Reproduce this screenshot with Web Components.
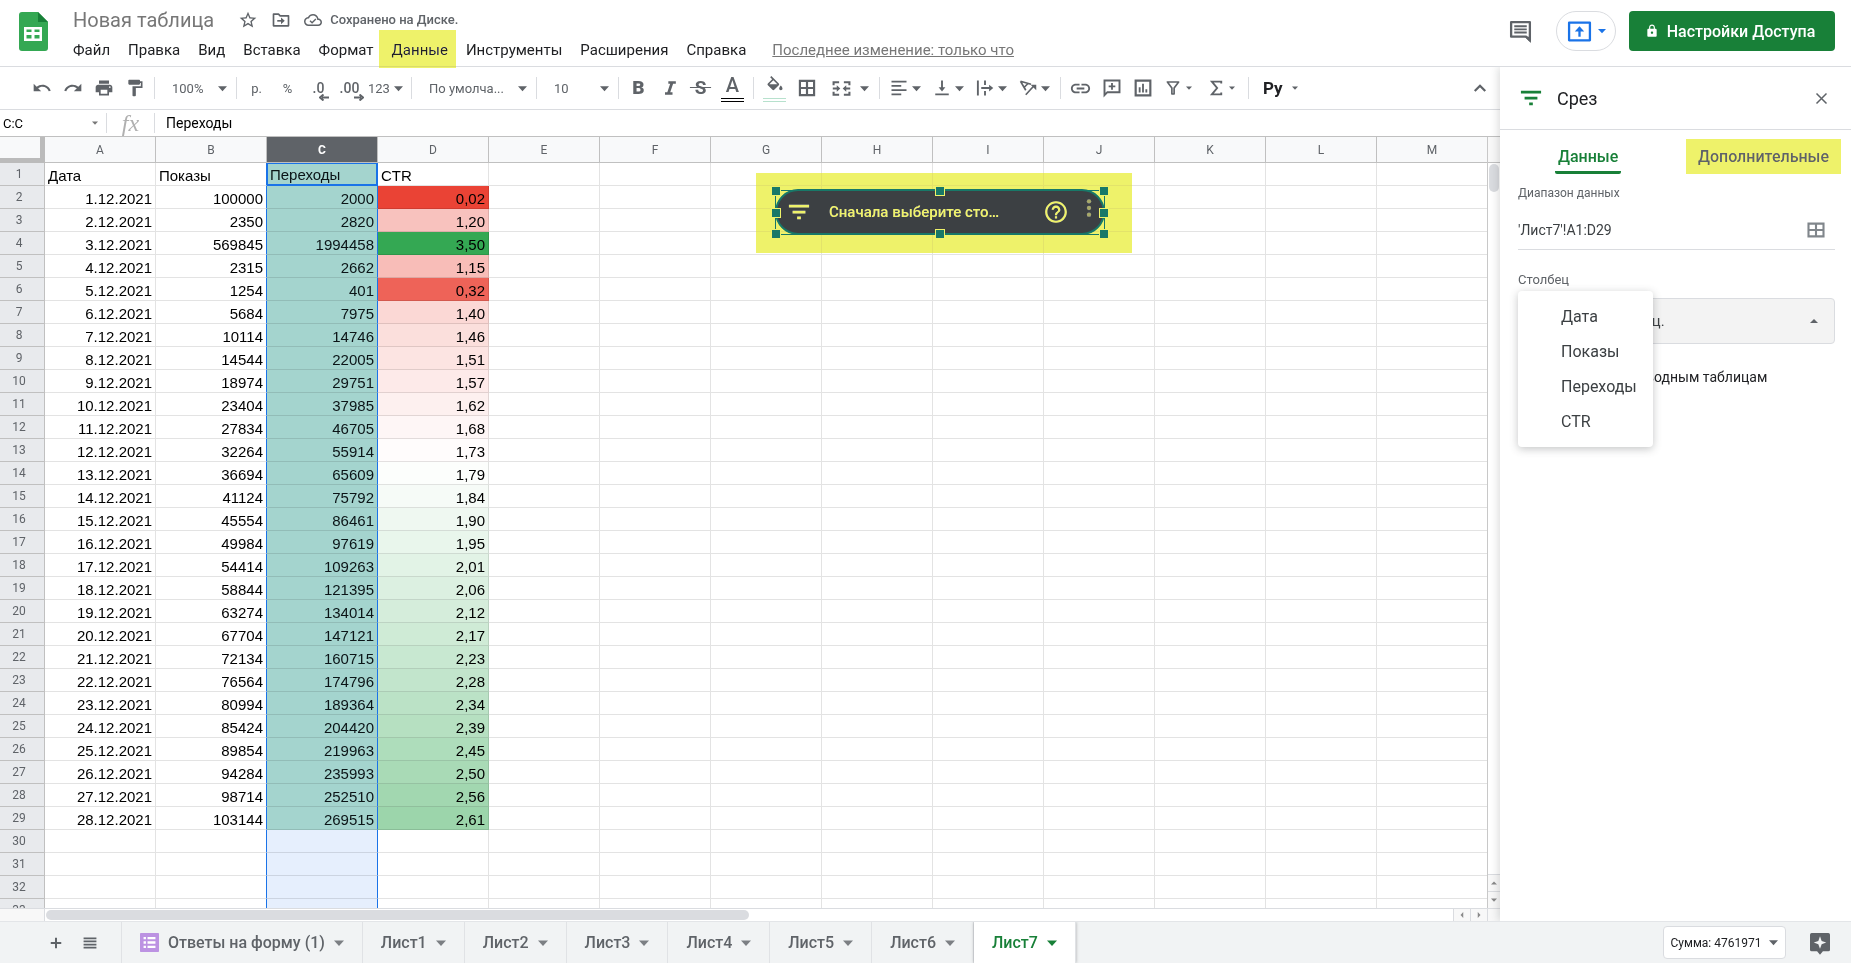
<!DOCTYPE html>
<html lang="ru">
<head>
<meta charset="utf-8">
<title>Новая таблица</title>
<style>
  html, body { margin: 0; height: 100%; }
  body { font-family: Roboto, "Liberation Sans", sans-serif; color: #202124; background: #fff; overflow: hidden; }
</style>
</head>
<body>
<spreadsheet-app></spreadsheet-app>
<script>
const BASE = `<style>
  *, *::before, *::after { box-sizing: border-box; }
  button, select, input { font: inherit; color: inherit; margin: 0; }
  button { border: 0; padding: 0; background: none; display: inline-flex; align-items: center; justify-content: center; white-space: nowrap; }
  select { appearance: none; border: 0; background: none; border-radius: 0; outline: 0; }
</style>`;

function define(name, markup, setup) {
  const template = document.createElement('template');
  customElements.define(name, class extends HTMLElement {
    constructor() {
      super();
      this.attachShadow({ mode: 'open' });
    }
    connectedCallback() {
      if (this.shadowRoot.childNodes.length) return;
      template.innerHTML = BASE + (typeof markup === 'function' ? markup(this) : markup);
      this.shadowRoot.append(template.content.cloneNode(true));
      if (setup) setup(this, this.shadowRoot);
    }
  });
}

/* ---------- icons ---------- */
const line = (d, w = 2, extra = '') => `<path d="${d}" fill="none" stroke="currentColor" stroke-width="${w}" ${extra}/>`;
const solid = d => `<path d="${d}"/>`;
const ICONS = {
  undo: solid('M12.5 8c-2.65 0-5.05.99-6.9 2.6L2 7v9h9l-3.62-3.62c1.39-1.16 3.16-1.88 5.12-1.88 3.54 0 6.55 2.31 7.6 5.5l2.37-.78C21.08 11.03 17.15 8 12.5 8z'),
  redo: solid('M18.4 10.6C16.55 8.99 14.15 8 11.5 8c-4.65 0-8.58 3.03-9.96 7.22L3.9 16c1.05-3.19 4.05-5.5 7.6-5.5 1.95 0 3.73.72 5.12 1.88L13 16h9V7l-3.6 3.6z'),
  print: solid('M19 8H5c-1.66 0-3 1.34-3 3v6h4v4h12v-4h4v-6c0-1.66-1.34-3-3-3zm-3 11H8v-5h8v5zm3-7c-.55 0-1-.45-1-1s.45-1 1-1 1 .45 1 1-.45 1-1 1zm-1-9H6v4h12V3z'),
  paint: solid('M18 4V3c0-.55-.45-1-1-1H5c-.55 0-1 .45-1 1v4c0 .55.45 1 1 1h12c.55 0 1-.45 1-1V6h1v4H9v11c0 .55.45 1 1 1h2c.55 0 1-.45 1-1v-9h8V4h-3z'),
  italic: solid('M10 4v3h2.21l-3.42 10H6v3h9v-3h-2.71l3.42-10H19V4z'),
  fill: solid('M16.56 8.94L7.62 0 6.21 1.41l2.38 2.38-5.15 5.15c-.59.59-.59 1.54 0 2.12l5.5 5.5c.29.29.68.44 1.06.44s.77-.15 1.06-.44l5.5-5.5c.59-.58.59-1.53 0-2.12zM5.21 10L10 5.21 14.79 10H5.21zM19 11.5s-2 2.17-2 3.5c0 1.1.9 2 2 2s2-.9 2-2c0-1.33-2-3.5-2-3.5z'),
  borders: line('M3.5 3.5h17v17h-17zM12 3.5v17M3.5 12h17', 2.6),
  range: line('M2 3.5h20v17H2zM12 3.5v17M2 12h20', 2.8),
  merge: line('M9 4H2v4M15 4h7v4M9 20H2v-4M15 20h7v-4M1 12h6M23 12h-6', 2.6) + solid('M6 8l4.5 4L6 16zM18 8l-4.500 4 4.500 4z'),
  align: line('M2 3.500h20M2 9.200h13M2 14.900h20M2 20.600h13', 2.4),
  valign: line('M3 20.500h18M12 2v12', 2.5) + solid('M7.500 11h9L12 16.500z'),
  wrap: line('M2.500 2v20M12 2v6M12 16v6M7 12h12', 2.5) + solid('M17.500 7.500L23 12l-5.500 4.500z'),
  rotate: line('M2 3l14 4M2 3l7 12M7 11l5-5M9 21L20 9', 2.2) + solid('M15.500 7.500H23V15z'),
  link: solid('M3.900 12c0-1.710 1.390-3.100 3.100-3.100h4V7H7c-2.760 0-5 2.240-5 5s2.240 5 5 5h4v-1.900H7c-1.710 0-3.100-1.390-3.100-3.100zM8 13h8v-2H8v2zm9-6h-4v1.900h4c1.710 0 3.100 1.390 3.100 3.100s-1.390 3.100-3.100 3.100h-4V17h4c2.760 0 5-2.240 5-5s-2.240-5-5-5z'),
  addComment: line('M3 20.500V3h18v14H6.500z', 2.300) + line('M12 6v8M8 10h8', 2.200),
  chart: line('M3.200 3.200h17.600v17.600H3.200z', 2.600) + line('M8 11v6.500M12 7v10.500M16 13.500v4', 2.200),
  funnel: line('M4.500 4h15l-6 8v8h-3v-8z', 2.200, 'stroke-linejoin="round"'),
  sum: line('M19 6V3.500H6.500l7 8.500-7 8.500H19V18', 2.500),
  up: line('M5 16l7-7 7 7', 3),
  star: solid('M22 9.240l-7.190-.620L12 2 9.190 8.630 2 9.240l5.460 4.730L5.820 21 12 17.270 18.180 21l-1.630-7.030L22 9.240zM12 15.400l-3.760 2.270 1-4.280-3.320-2.880 4.380-.380L12 6.100l1.710 4.040 4.380.380-3.320 2.880 1 4.280L12 15.400z'),
  move: line('M3 6.500V19h18V7H11L9 5H3z', 2, 'stroke-linejoin="round"') + line('M7.500 13h7', 2) + solid('M12 9l4.500 4-4.500 4z'),
  cloud: solid('M19.350 10.040C18.670 6.590 15.640 4 12 4 9.110 4 6.600 5.640 5.350 8.040 2.340 8.360 0 10.910 0 14c0 3.310 2.690 6 6 6h13c2.760 0 5-2.240 5-5 0-2.640-2.050-4.780-4.650-4.960zM19 18H6c-2.210 0-4-1.790-4-4 0-2.050 1.530-3.760 3.560-3.970l1.070-.110.500-.950C8.080 7.140 9.940 6 12 6c2.620 0 4.880 1.860 5.390 4.430l.300 1.500 1.530.110c1.560.100 2.780 1.410 2.780 2.960 0 1.650-1.350 3-3 3z') + line('M8 13l2.800 2.800 5-5', 1.800),
  comment: line('M3 3h18v17.500L17.500 17H3z', 2.200, 'stroke-linejoin="round"') + line('M6 7h12M6 10h12M6 13h12', 1.800) + solid('M16 17h6v6z'),
  present: line('M2 3.500h20v17H2z', 2.200, 'stroke-linejoin="round"') + line('M12 17v-7', 2.200) + solid('M7.500 12L12 7l4.500 5z'),
  lock: solid('M18 8h-1V6c0-2.760-2.240-5-5-5S7 3.240 7 6v2H6c-1.100 0-2 .900-2 2v10c0 1.100.900 2 2 2h12c1.100 0 2-.900 2-2V10c0-1.100-.900-2-2-2zm-6 9c-1.100 0-2-.900-2-2s.900-2 2-2 2 .900 2 2-.900 2-2 2zM9 8V6c0-1.660 1.340-3 3-3s3 1.340 3 3v2H9z'),
  filter: solid('M1 4h22v3H1zM5 10.500h14v3H5zM10 17h4v3h-4z'),
  close: line('M4 4l16 16M20 4L4 20', 2.400),
  help: solid('M11 18h2v-2h-2v2zm1-16C6.480 2 2 6.480 2 12s4.480 10 10 10 10-4.480 10-10S17.520 2 12 2zm0 18c-4.410 0-8-3.590-8-8s3.590-8 8-8 8 3.590 8 8-3.590 8-8 8zm0-14c-2.210 0-4 1.790-4 4h2c0-1.100.900-2 2-2s2 .900 2 2c0 2-3 1.750-3 5h2c0-2.250 3-2.500 3-5 0-2.210-1.790-4-4-4z'),
  more: '<circle cx="12" cy="4" r="2.600"/><circle cx="12" cy="12" r="2.600"/><circle cx="12" cy="20" r="2.600"/>',
  plus: line('M12 3v18M3 12h18', 3.400),
  list: line('M1 4h22M1 9.300h22M1 14.700h22M1 20h22', 3.200),
  arrow: solid('M0 6h24L12 19z'),
  arrowUp: solid('M0 18h24L12 6z'),
  arrowLeft: solid('M17 0v24L6 12z'),
  arrowRight: solid('M7 0v24l11-12z'),
  form: '<rect width="24" height="24" rx="1" fill="#bc92e2"/><path d="M4.500 5h3v3h-3zM4.500 10.500h3v3h-3zM4.500 16h3v3h-3zM9.500 5h10v3h-10zM9.500 10.500h10v3h-10zM9.500 16h10v3h-10z" fill="#fff"/>',
  explore: solid('M2 0h20q2 0 2 2v18q0 2-2 2h-6.500L12 26l-3.500-4H2q-2 0-2-2V2q0-2 2-2zm10 4l-2 5.500L4.500 11.500 10 13.500l2 5.500 2-5.500 5.500-2L14 9.500z'),
};
define('ui-icon', el => `<style>
  :host { display: inline-flex; flex: none; width: var(--size, 20px); height: var(--size, 20px); }
  svg { width: 100%; height: 100%; fill: currentColor; display: block; overflow: visible; }
</style><svg viewBox="0 0 24 24" aria-hidden="true">${ICONS[el.getAttribute('name')]}</svg>`);

/* Marker-pen highlight laid over whatever it is placed on. */
define('marker-highlight', `<style>
  :host { display: block; position: absolute; background: #eef26a; mix-blend-mode: darken; pointer-events: none; }
</style>`);

/* ---------- header ---------- */
define('menu-bar', `<style>
  :host { display: flex; align-items: center; gap: 18px; height: 26px; font-size: 15px; white-space: nowrap; }
  .cur { position: relative; }
  marker-highlight { inset: -7px -8px -5px -13px; }
  a { color: #777; margin-left: 8px; }
  button { height: 26px; }
</style>
<button>Файл</button><button>Правка</button><button>Вид</button><button>Вставка</button><button>Формат</button>
<div class="cur"><button>Данные</button><marker-highlight></marker-highlight></div>
<button>Инструменты</button><button>Расширения</button><button>Справка</button>
<a href="#history">Последнее изменение: только что</a>`);

define('app-header', `<style>
  :host { display: flex; height: 67px; border-bottom: 1px solid #dadce0; color: #202124; }
  .logo { flex: none; margin: 11px 25px 0 19px; width: 29px; height: 41px; }
  .doc { flex: 1; min-width: 0; padding-top: 4px; }
  .title { display: flex; align-items: center; height: 31px; margin-bottom: 2px; color: #5f6368; }
  h1 { margin: 0 24px 0 0; font-size: 20px; font-weight: 400; line-height: 28px; color: #777; white-space: nowrap; }
  .title button { margin-right: 13px; }
  .saved { font-size: 13px; font-weight: 500; margin-left: 8px; white-space: nowrap; }
  .actions { display: flex; align-items: flex-start; padding: 11px 16px 0 0; }
  .comments { height: 40px; color: #5f6368; margin-right: 23px; }
  .present { width: 60px; height: 40px; border: 1px solid #dadce0; border-radius: 20px; color: #1a73e8; gap: 6px; margin-right: 13px; }
  .share { height: 40px; width: 206px; padding-right: 4px; border-radius: 4px; background: #188038; color: #fff; font-size: 16px; font-weight: 500; gap: 8px; }
</style>
<svg class="logo" viewBox="0 0 29 41" aria-hidden="true">
  <path d="M3 1h16l10 10v26q0 3-3 3H3q-3 0-3-3V4q0-3 3-3z" fill="#34a853"/>
  <path d="M19 1l10 10H19z" fill="#188038"/>
  <path d="M5 16h18v14H5zM7.500 18.500v2.500h5v-2.500zm8 0v2.500h5v-2.500zM7.500 24v3.500h5V24zm8 0v3.500h5V24z" fill="#fff" fill-rule="evenodd"/>
</svg>
<div class="doc">
  <div class="title">
    <h1>Новая таблица</h1>
    <button aria-label="Пометить"><ui-icon name="star"></ui-icon></button>
    <button aria-label="Переместить"><ui-icon name="move"></ui-icon></button>
    <ui-icon name="cloud" style="--size:18px"></ui-icon>
    <span class="saved">Сохранено на Диске.</span>
  </div>
  <menu-bar></menu-bar>
</div>
<div class="actions">
  <button class="comments" aria-label="Комментарии"><ui-icon name="comment" style="--size:25px"></ui-icon></button>
  <button class="present" aria-label="Презентация"><ui-icon name="present" style="--size:25px"></ui-icon><ui-icon name="arrow" style="--size:8px"></ui-icon></button>
  <button class="share"><ui-icon name="lock" style="--size:14px"></ui-icon>Настройки Доступа</button>
</div>`);

/* ---------- toolbar ---------- */
define('tool-button', el => `<style>
  :host { display: flex; flex: none; width: 31px; height: 32px; }
  :host([swatch]) { width: 33px; }
  :host([menu]) { width: 43px; }
  :host([menu="wide"]) { width: 53px; }
  button { width: 100%; height: 100%; position: relative; }
  :host([menu]) button { justify-content: flex-start; padding-left: 6px; gap: 4px; }
  :host([menu="wide"]) button { padding-left: 10px; gap: 9px; }
  .box { display: flex; justify-content: center; min-width: 18px; }
  .down { color: #5f6368; }
</style><button aria-label="${el.getAttribute('label')}"><span class="box"><slot></slot></span>${el.hasAttribute('menu') ? `<ui-icon class="down" name="arrow" style="--size:${el.hasAttribute('small') ? 6 : 9}px"></ui-icon>` : ''}</button>`);

define('tool-select', el => `<style>
  :host { display: grid; grid-template-columns: 1fr 14px; align-items: center; flex: none; width: 73px; height: 32px; }
  :host([wide]) { width: 116px; }
  select { grid-area: 1 / 1 / 2 / 3; height: 32px; padding: 0 0 0 13px; width: 100%; }
  ui-icon { grid-area: 1 / 2; pointer-events: none; }
</style><select aria-label="${el.getAttribute('label')}"><option>${el.getAttribute('value')}</option></select><ui-icon name="arrow" style="--size:9px"></ui-icon>`);

define('tool-bar', `<style>
  :host { display: flex; align-items: center; height: 43px; padding: 0 5px 0 26px; border-bottom: 1px solid #dadce0; color: #5f6368; font-size: 13px; background: #fff; }
  hr { flex: none; width: 1px; height: 22px; margin: 0 4px; border: 0; background: #dadce0; }
  .dec { position: relative; font-size: 14px; font-weight: 500; }
  .n { display: flex; align-items: center; gap: 4px; width: 42px; height: 32px; justify-content: flex-start; padding-left: 3px; font-size: 13px; }
  .b { font-size: 19px; font-weight: 900; line-height: 22px; }
  .s { font-size: 19px; font-weight: 700; line-height: 22px; }
  .sw { display: flex; flex-direction: column; align-items: center; width: 23px; height: 28px; border-bottom: 4px double #000; font-size: 20px; font-weight: 500; line-height: 22px; }
  .sw.mint { border-color: #b7e1cd; padding-top: 2px; }
  .py { font-size: 17px; font-weight: 700; color: #202124; }
  .end { margin-left: auto; }
  svg { position: absolute; right: -5px; top: 14px; width: 10px; height: 7px; }
</style>
<tool-button label="Отменить"><ui-icon name="undo"></ui-icon></tool-button>
<tool-button label="Повторить"><ui-icon name="redo"></ui-icon></tool-button>
<tool-button label="Печать"><ui-icon name="print"></ui-icon></tool-button>
<tool-button label="Копировать форматирование"><ui-icon name="paint"></ui-icon></tool-button>
<hr>
<tool-select label="Масштаб" value="100%"></tool-select>
<hr>
<tool-button label="Денежный формат">р.</tool-button>
<tool-button label="Процентный формат">%</tool-button>
<tool-button label="Меньше знаков"><span class="dec">.0<svg viewBox="0 0 10 7"><path d="M3 3.500h7M4.500 .500L1 3.500l3.500 3" stroke="#5f6368" stroke-width="2" fill="none"/></svg></span></tool-button>
<tool-button label="Больше знаков"><span class="dec">.00<svg viewBox="0 0 10 7"><path d="M0 3.500h7M5.500 .500L9 3.500l-3.500 3" stroke="#5f6368" stroke-width="2" fill="none"/></svg></span></tool-button>
<button class="n" aria-label="Другие форматы">123<ui-icon name="arrow" style="--size:9px"></ui-icon></button>
<hr>
<tool-select wide label="Шрифт" value="По умолча..."></tool-select>
<hr>
<tool-select label="Размер шрифта" value="10"></tool-select>
<hr>
<tool-button label="Полужирный"><span class="b">B</span></tool-button>
<tool-button label="Курсив"><ui-icon name="italic"></ui-icon></tool-button>
<tool-button label="Зачеркнутый"><s class="s">&nbsp;S&nbsp;</s></tool-button>
<tool-button swatch label="Цвет текста"><span class="sw">A</span></tool-button>
<hr>
<tool-button swatch label="Цвет заливки"><span class="sw mint"><ui-icon name="fill"></ui-icon></span></tool-button>
<tool-button label="Границы"><ui-icon name="borders"></ui-icon></tool-button>
<tool-button menu="wide" label="Объединить ячейки"><ui-icon name="merge" style="--size:19px"></ui-icon></tool-button>
<hr>
<tool-button menu label="Горизонтальное выравнивание"><ui-icon name="align" style="--size:18px"></ui-icon></tool-button>
<tool-button menu label="Вертикальное выравнивание"><ui-icon name="valign" style="--size:18px"></ui-icon></tool-button>
<tool-button menu label="Перенос текста"><ui-icon name="wrap" style="--size:18px"></ui-icon></tool-button>
<tool-button menu label="Поворот текста"><ui-icon name="rotate" style="--size:18px"></ui-icon></tool-button>
<hr>
<tool-button label="Вставить ссылку"><ui-icon name="link" style="--size:23px"></ui-icon></tool-button>
<tool-button label="Комментарий"><ui-icon name="addComment"></ui-icon></tool-button>
<tool-button label="Диаграмма"><ui-icon name="chart"></ui-icon></tool-button>
<tool-button menu small label="Фильтр"><ui-icon name="funnel" style="--size:18px"></ui-icon></tool-button>
<tool-button menu small label="Функции"><ui-icon name="sum" style="--size:18px"></ui-icon></tool-button>
<hr>
<tool-button menu="wide" small label="Способ ввода"><span class="py">Ру</span></tool-button>
<tool-button class="end" label="Скрыть меню"><ui-icon name="up" style="--size:18px"></ui-icon></tool-button>`);

define('formula-bar', `<style>
  :host { display: flex; align-items: center; height: 27px; border-bottom: 1px solid #c0c0c0; font-size: 14px; color: #000; background: #fff; }
  .name { width: 92px; height: 26px; border: 0; outline: 0; padding: 0 3px; font-size: 13px; background: none; }
  ui-icon { color: #777; }
  i { flex: none; width: 1px; height: 20px; background: #dadce0; }
  i:first-of-type { margin-left: 8px; }
  em { width: 47px; text-align: center; font: italic 24px/24px "Liberation Serif", serif; color: #b0b0b0; }
  .value { flex: 1; min-width: 0; height: 26px; border: 0; outline: 0; padding: 0 11px; background: none; }
</style>
<input class="name" aria-label="Поле имени" value="C:C"><ui-icon name="arrow" style="--size:6px"></ui-icon>
<i></i><em>fx</em><i></i>
<input class="value" aria-label="Строка формул" value="Переходы">`);

/* ---------- grid ---------- */
const ROWS = `100000 2000 0,02|2350 2820 1,20|569845 1994458 3,50|2315 2662 1,15|1254 401 0,32|5684 7975 1,40|10114 14746 1,46|14544 22005 1,51|18974 29751 1,57|23404 37985 1,62|27834 46705 1,68|32264 55914 1,73|36694 65609 1,79|41124 75792 1,84|45554 86461 1,90|49984 97619 1,95|54414 109263 2,01|58844 121395 2,06|63274 134014 2,12|67704 147121 2,17|72134 160715 2,23|76564 174796 2,28|80994 189364 2,34|85424 204420 2,39|89854 219963 2,45|94284 235993 2,50|98714 252510 2,56|103144 269515 2,61`
  .split('|').map((r, i) => [`${i + 1}.12.2021`, ...r.split(' ')]);

/* Three-point colour scale: red, white at the midpoint, green. */
function scale(text) {
  const v = parseFloat(text.replace(',', '.')), mid = 1.76, span = 1.74;
  const t = Math.min(1, Math.abs(v - mid) / span);
  const end = v < mid ? [234, 67, 53] : [52, 168, 83];
  return `rgb(${end.map(c => Math.round(255 + (c - 255) * t)).join(',')})`;
}

function buildRows() {
  let html = '';
  for (let r = 1; r <= 33; r++) {
    const data = r === 1 ? ['Дата', 'Показы', 'Переходы', 'CTR'] : ROWS[r - 2];
    html += `<tr><th scope="row">${r}</th>`;
    for (let c = 0; c < 13; c++) {
      const text = data && c < 4 ? data[c] : '';
      const cls = [c === 2 ? 'sel' : '', c === 2 && data ? 'teal' : '', c === 1 ? 'pre' : '', r === 1 ? 'head' : ''].join(' ').trim();
      const bg = c === 3 && r > 1 && data ? ` style="background:${scale(text)}"` : '';
      html += `<td${cls ? ` class="${cls}"` : ''}${bg}>${text}</td>`;
    }
    html += '</tr>';
  }
  return html;
}

define('slicer-chip', `<style>
  :host { display: block; position: absolute; width: 376px; height: 80px; padding: 16px 27px 18px 19px; }
  .chip { position: relative; display: flex; align-items: center; height: 46px; border: 2px solid #187868; border-radius: 23px; background: #3c4043; color: #fff; padding: 0 4px 0 11px; font-size: 15px; font-weight: 500; }
  .chip > span { flex: 1; margin-left: 19px; white-space: nowrap; }
  .dots { margin: 0 0 8px 10px; opacity: .55; }
  .frame { position: absolute; inset: 17px 27px 18px 19px; border: 1px solid #187868; }
  .frame i { position: absolute; width: 10px; height: 10px; margin: -5px; background: #187868; border: 1px solid #fff; }
  marker-highlight { inset: 0; }
</style>
<div class="chip"><ui-icon name="filter" style="--size:22px"></ui-icon><span>Сначала выберите сто…</span>
  <ui-icon name="help" style="--size:26px"></ui-icon><ui-icon class="dots" name="more" style="--size:20px"></ui-icon></div>
<div class="frame">
  <i style="left:0;top:0"></i><i style="left:50%;top:0"></i><i style="left:100%;top:0"></i>
  <i style="left:0;top:50%"></i><i style="left:100%;top:50%"></i>
  <i style="left:0;top:100%"></i><i style="left:50%;top:100%"></i><i style="left:100%;top:100%"></i>
</div>
<marker-highlight></marker-highlight>`);

define('sheet-grid', () => `<style>
  :host { display: grid; grid-template: minmax(0, 1fr) 13px / minmax(0, 1fr) 12px; background: #fff; }
  .view { position: relative; overflow: hidden; border-right: 1px solid #c8c8c8; }
  table { border-collapse: separate; border-spacing: 0; table-layout: fixed; width: 1488px; }
  th, td { padding: 0 3px; overflow: hidden; white-space: nowrap; border: solid; border-width: 0 1px 1px 0; }
  thead th { height: 26px; line-height: 24px; padding-top: 1px; background: #f8f9fa; border-color: #c0c0c0; font-size: 12px; font-weight: 400; color: #5f6368; }
  thead th:first-child { width: 45px; border: solid #bbb; border-width: 0 5px 5px 0; }
  thead th.on { background: #5f6368; color: #fff; font-weight: 700; }
  tbody th { height: 23px; line-height: 20px; background: #e8eaed; border-color: #c0c0c0; font-size: 12px; font-weight: 400; color: #5f6368; padding: 0 6px 1px 0; }
  td { height: 23px; line-height: 19px; padding: 2px 3px 0; border-color: rgba(0, 0, 0, .11); font-family: "Liberation Sans", Arial, sans-serif; font-size: 15px; text-align: right; color: #000; }
  td.head { text-align: left; }
  td.sel { background: #e6effd; border-right-color: #1a73e8; }
  td.pre { border-right-color: #1a73e8; }
  td.teal { background: #a4d4ce; color: #0b1417; }
  td.sel.head { box-shadow: inset 1px 1px #1a73e8, inset -1px 0 #1a73e8; border-bottom: 2px solid #1a73e8; }
  .vbar, .hbar { display: flex; background: #fff; }
  .vbar { flex-direction: column; }
  .cap { flex: none; height: 26px; background: #f8f8f8; border-bottom: 1px solid #c0c0c0; }
  .vtrack { flex: 1; padding: 1px; }
  .vthumb { height: 28px; border-radius: 6px; background: #dadce0; }
  .vbar button { flex: none; height: 17px; border-top: 1px solid #dadce0; background: #f8f8f8; color: #888; }
  .hbar { border: solid #dadce0; border-width: 1px 1px 0 0; }
  .stub { flex: none; width: 45px; background: #f8f8f8; border-right: 1px solid #dadce0; }
  .htrack { flex: 1; padding: 1px; }
  .hthumb { width: 50%; height: 10px; border-radius: 6px; background: #dadce0; }
  .hbar button { flex: none; width: 17px; border-left: 1px solid #dadce0; background: #f8f8f8; color: #888; }
  .corner { border-top: 1px solid #dadce0; background: #f8f8f8; }
  slicer-chip { left: 756px; top: 36px; }
</style>
<div class="view">
  <table><thead><tr><th aria-label="Выделить все"></th>${'ABCDEFGHIJKLM'.split('').map(l => `<th scope="col"${l === 'C' ? ' class="on"' : ''}>${l}</th>`).join('')}</tr></thead>
  <tbody>${buildRows()}</tbody></table>
  <slicer-chip></slicer-chip>
</div>
<div class="vbar"><div class="cap"></div><div class="vtrack"><div class="vthumb"></div></div>
  <button aria-label="Вверх"><ui-icon name="arrowUp" style="--size:6px"></ui-icon></button><button aria-label="Вниз"><ui-icon name="arrow" style="--size:6px"></ui-icon></button></div>
<div class="hbar"><div class="stub"></div><div class="htrack"><div class="hthumb"></div></div>
  <button aria-label="Влево"><ui-icon name="arrowLeft" style="--size:6px"></ui-icon></button><button aria-label="Вправо"><ui-icon name="arrowRight" style="--size:6px"></ui-icon></button></div>
<div class="corner"></div>`);

/* ---------- side panel ---------- */
define('side-panel', `<style>
  :host { display: block; background: #fff; box-shadow: -2px 0 8px rgba(60, 64, 67, .18); position: relative; color: #3c4043; }
  header { display: flex; align-items: center; height: 63px; padding: 0 22px 0 20px; border-bottom: 1px solid #dadce0; }
  header > ui-icon { color: #188038; }
  h2 { flex: 1; margin: 0 0 0 15px; font-size: 18px; font-weight: 400; color: #202124; }
  header button { color: #5f6368; }
  nav { display: flex; justify-content: space-between; padding: 9px 10px 0 55px; height: 44px; font-size: 16px; font-weight: 500; }
  nav button { position: relative; height: 35px; padding: 0 3px; color: #5f6368; }
  nav .on { color: #188038; border-bottom: 3px solid #188038; border-radius: 2px; padding-top: 3px; }
  nav .more { width: 155px; }
  marker-highlight { inset: 0; }
  .body { padding: 9px 16px 0 18px; }
  label { display: block; font-size: 13px; line-height: 20px; color: #5f6368; }
  .small { font-size: 12px; }
  .range { display: flex; align-items: center; height: 47px; padding: 7px 10px 0 0; border-bottom: 1px solid #dadce0; margin-bottom: 20px; color: #80868b; }
  .range input { flex: 1; min-width: 0; border: 0; outline: 0; padding: 0; background: none; font-size: 14px; color: #3c4043; }
  .pick { position: relative; margin-top: 8px; }
  .pick select { width: 100%; height: 46px; padding: 0 12px; border: 1px solid #dadce0; border-radius: 4px; background: #f3f3f3; font-size: 15px; color: #3c4043; }
  .pick > ui-icon { position: absolute; right: 17px; top: 19px; color: #5f6368; }
  ul { position: absolute; left: 0; top: -7px; width: 135px; margin: 0; padding: 8px; list-style: none; background: #fff; border-radius: 4px; box-shadow: 0 2px 8px rgba(60, 64, 67, .3); font-size: 16px; }
  li { height: 35px; line-height: 35px; padding-left: 35px; white-space: nowrap; }
  .check { display: flex; align-items: center; margin-top: 21px; font-size: 14px; line-height: 24px; color: #202124; }
  .check input { width: 16px; height: 16px; margin: 0 16px 0 0; }
</style>
<header><ui-icon name="filter" style="--size:22px"></ui-icon><h2>Срез</h2><button aria-label="Закрыть"><ui-icon name="close" style="--size:15px"></ui-icon></button></header>
<nav><button class="on">Данные</button><button class="more">Дополнительные<marker-highlight></marker-highlight></button></nav>
<div class="body">
  <label class="small" for="range">Диапазон данных</label>
  <div class="range"><input id="range" value="'Лист7'!A1:D29"><ui-icon name="range" style="--size:18px"></ui-icon></div>
  <label for="column">Столбец</label>
  <div class="pick">
    <select id="column"><option>Выберите столбец.</option></select><ui-icon name="arrowUp" style="--size:8px"></ui-icon>
    <label class="check"><input type="checkbox" checked>Применить к сводным таблицам</label>
    <ul><li>Дата</li><li>Показы</li><li>Переходы</li><li>CTR</li></ul>
  </div>
</div>`);

/* ---------- bottom bar ---------- */
define('sheet-tab', `<style>
  :host { display: flex; border-right: 1px solid #e0e2e5; color: #5f6368; font-size: 16px; font-weight: 500; }
  :host([active]) { background: #fff; color: #188038; box-shadow: 0 0 3px rgba(60, 64, 67, .4); clip-path: inset(0 -4px); }
  button { padding: 0 18px; gap: 9px; }
  .down { opacity: .8; }
  :host([active]) .down { opacity: 1; }
</style><button><slot></slot><ui-icon class="down" name="arrow" style="--size:10px"></ui-icon></button>`);

define('sheet-tabs', `<style>
  :host { display: flex; height: 42px; border-top: 1px solid #e3e5e8; background: #f1f3f4; color: #5f6368; }
  .left { display: flex; align-items: center; width: 122px; padding-left: 49px; gap: 20px; border-right: 1px solid #e0e2e5; }
  .right { display: flex; align-items: center; gap: 24px; margin-left: auto; padding-right: 21px; }
  .sum { height: 33px; width: 123px; gap: 8px; border: 1px solid #dadce0; border-radius: 4px; background: #fff; color: #202124; font-size: 12px; }
  .sum ui-icon { color: #5f6368; }
</style>
<div class="left"><button aria-label="Добавить лист"><ui-icon name="plus" style="--size:14px"></ui-icon></button><button aria-label="Все листы"><ui-icon name="list" style="--size:14px"></ui-icon></button></div>
<sheet-tab><ui-icon name="form" style="--size:19px"></ui-icon>Ответы на форму (1)</sheet-tab>
<sheet-tab>Лист1</sheet-tab><sheet-tab>Лист2</sheet-tab><sheet-tab>Лист3</sheet-tab><sheet-tab>Лист4</sheet-tab><sheet-tab>Лист5</sheet-tab><sheet-tab>Лист6</sheet-tab><sheet-tab active>Лист7</sheet-tab>
<div class="right"><button class="sum">Сумма: 4761971<ui-icon name="arrow" style="--size:9px"></ui-icon></button><button aria-label="Анализ данных"><ui-icon name="explore"></ui-icon></button></div>`);

define('spreadsheet-app', `<style>
  :host { display: grid; grid-template: auto minmax(0, 1fr) auto / minmax(0, 1fr) 351px; height: 100vh; }
  app-header, sheet-tabs { grid-column: 1 / -1; }
  main { display: grid; grid-template: auto auto minmax(0, 1fr) / minmax(0, 1fr); min-width: 0; }
  side-panel { clip-path: inset(0 0 0 -12px); }
</style>
<app-header></app-header>
<main><tool-bar></tool-bar><formula-bar></formula-bar><sheet-grid></sheet-grid></main>
<side-panel></side-panel>
<sheet-tabs></sheet-tabs>`);
</script>
</body>
</html>
